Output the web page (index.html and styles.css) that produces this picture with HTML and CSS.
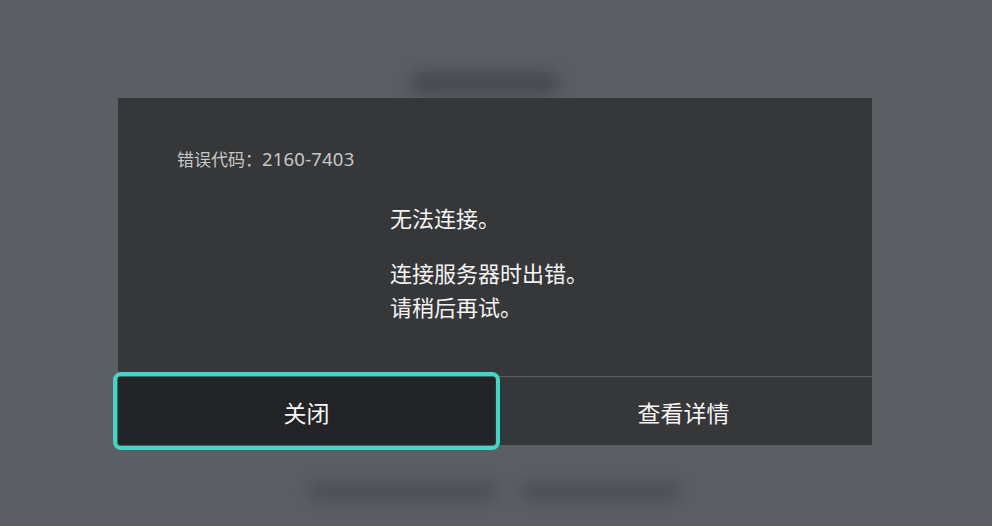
FILE: index.html
```html
<!DOCTYPE html>
<html lang="zh-CN">

<head>
    <meta charset="UTF-8">
    <meta name="viewport" content="width=device-width, initial-scale=1.0">
    <title>错误</title>
    <link rel="stylesheet" href="styles.css">
</head>

<body>

    <div class="screen">
        <!-- blurred page behind the dialog -->
        <div class="back">
            <div class="back-title"></div>
            <div class="back-foot">
                <div class="blob blob-a"></div>
                <div class="blob blob-b"></div>
            </div>
        </div>

        <div class="dialog">
            <div class="dialog-body">
                <div class="code">错误代码：<span class="code-num">2160-7403</span></div>
                <div class="msg">
                    <p class="msg-head">无法连接。</p>
                    <p class="msg-text">连接服务器时出错。<br>请稍后再试。</p>
                </div>
            </div>
            <div class="dialog-buttons">
                <button class="btn btn-focus">关闭</button>
                <button class="btn">查看详情</button>
            </div>
        </div>
    </div>

</body>

</html>
```

FILE: styles.css
```css
body {
    margin: 0;
    background-color: #5b5e63;
    font-family: "Noto Sans CJK SC", "Noto Sans", sans-serif;
}

.screen {
    width: 992px;
    height: 526px;
    position: relative;
    overflow: hidden;
}

.back {
    height: 100%;
    display: flex;
    flex-direction: column;
    align-items: center;
}

.back-title {
    width: 150px;
    height: 22px;
    margin-top: 72px;
    margin-left: -22px;
    border-radius: 10px;
    background-color: #46494e;
    filter: blur(8px);
}

.back-foot {
    margin-top: auto;
    margin-bottom: 26px;
    margin-left: -4px;
    display: flex;
    gap: 24px;
}

.blob {
    height: 18px;
    border-radius: 9px;
    background-color: #4b4e53;
    filter: blur(8px);
}

.blob-a {
    width: 190px;
}

.blob-b {
    width: 160px;
}

.dialog {
    position: absolute;
    left: 118px;
    top: 98px;
    width: 754px;
    height: 347px;
    background-color: #363739;
    display: flex;
    flex-direction: column;
}

.dialog-body {
    height: 279px;
    border-bottom: 1px solid #5c5d60;
    box-sizing: border-box;
    padding-top: 49px;
}

.code {
    margin-left: 59px;
    font-size: 17px;
    line-height: 24px;
    color: #c8c8c8;
}

.code-num {
    font-family: "Noto Sans", sans-serif;
    font-size: 18.5px;
    letter-spacing: 0.2px;
}

.msg {
    margin-top: 29px;
    padding-left: 272px;
    color: #f4f4f4;
    font-size: 22px;
    line-height: 34px;
}

.msg p {
    margin: 0;
}

.msg-text {
    margin-top: 21px !important;
}

.dialog-buttons {
    flex: 1;
    display: grid;
    grid-template-columns: 1fr 1fr;
}

.btn {
    border: none;
    background: none;
    color: #f6f6f6;
    font-family: inherit;
    font-size: 23px;
    padding: 2px 0 0;
}

.btn-focus {
    background-color: #232426;
    border-radius: 3px;
    outline: 4px solid #3fd8c7;
    outline-offset: 1px;
}
```
